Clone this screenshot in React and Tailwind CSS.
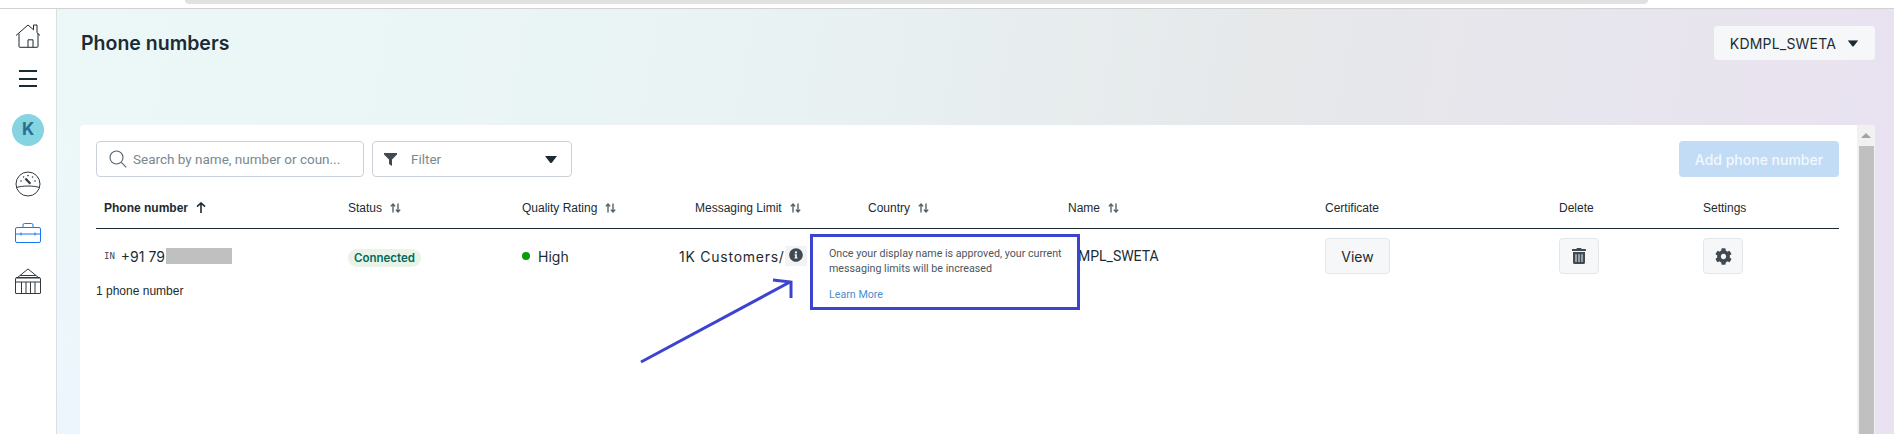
import React from "react";
import { FaTrashAlt, FaCog, FaInfoCircle } from "react-icons/fa";

const Sort = () => (
  <svg width="11" height="10" viewBox="0 0 11 10" className="ml-2 shrink-0" fill="none" stroke="#56636b" strokeWidth="1.4">
    <path d="M3 9.5V1M.8 3.4 3 1l2.2 2.4" />
    <path d="M8 .5V9M5.8 6.6 8 9l2.2-2.4" />
  </svg>
);

const Caret = ({ className = "" }) => (
  <svg width="12" height="7" viewBox="0 0 12 7" className={className}>
    <path d="M0 0h12L7 6.4a1.2 1.2 0 0 1-2 0z" fill="#1c2b33" />
  </svg>
);

const Funnel = () => (
  <svg width="13" height="13" viewBox="0 0 13 13" className="shrink-0">
    <path d="M0 0h13v1.6L8 6.6V13L5 11V6.6L0 1.6z" fill="#3f4a52" />
  </svg>
);

const Home = () => (
  <svg width="26" height="24" viewBox="0 0 26 24" fill="none" stroke="#1c2b33" strokeWidth="1">
    <path d="M1 11.5 13 1l5.5 4.8M22 8.8l3 2.7" />
    <path d="M18.5 5.8V1h3.5v7.8" />
    <path d="M4 9.5V22.5a.8.8 0 0 0 .8.8h17.4a.8.8 0 0 0 .8-.8V9.5" />
    <path d="M13 23.2V15.8h5v7.4" />
  </svg>
);

const Gauge = () => (
  <svg width="26" height="26" viewBox="0 0 26 26" fill="none" stroke="#2f3a41" strokeWidth="1">
    <circle cx="13" cy="13" r="12" />
    <path d="M1.6 16.5c6-2 16.8-2 22.8 0" />
    <path d="M10.4 7.6 15.4 12.8" strokeWidth="2.2" />
    <circle cx="6" cy="10" r=".8" fill="#2f3a41" stroke="none" />
    <circle cx="8.6" cy="6" r=".8" fill="#2f3a41" stroke="none" />
    <circle cx="13" cy="4.6" r=".8" fill="#2f3a41" stroke="none" />
    <circle cx="17.6" cy="6" r=".8" fill="#2f3a41" stroke="none" />
    <circle cx="20" cy="10" r=".8" fill="#2f3a41" stroke="none" />
  </svg>
);

const Briefcase = () => (
  <svg width="26" height="20" viewBox="0 0 26 20" fill="none" stroke="#1877f2" strokeWidth="1">
    <rect x=".5" y="4.5" width="25" height="15" rx="1.5" />
    <path d="M8 4.5V2a1.5 1.5 0 0 1 1.5-1.5h7A1.5 1.5 0 0 1 18 2v2.5" />
    <path d="M.5 11h25M6 9.5v3M20 9.5v3" />
  </svg>
);

const Bank = () => (
  <svg width="26" height="26" viewBox="0 0 26 26" fill="none" stroke="#2f3a41" strokeWidth="1">
    <path d="M2.5 9.5 13 1l10.5 8.5M1 9.5h24" />
    <rect x=".5" y="10" width="25" height="15.5" rx=".5" />
    <path d="M.5 14h25M6.5 14v11.5M11 14v11.5M15.5 14v11.5M20 14v11.5" />
    <path d="M5 7.5h16" />
  </svg>
);

const Search = () => (
  <svg width="18" height="18" viewBox="0 0 18 18" className="shrink-0" fill="none" stroke="#56636b" strokeWidth="1.1">
    <circle cx="7.5" cy="7.5" r="6.5" />
    <path d="m12.3 12.3 5 5" />
  </svg>
);

const headers = [
  ["Phone number", "up"],
  ["Status", true],
  ["Quality Rating", true],
  ["Messaging Limit", true],
  ["Country", true],
  ["Name", true],
  ["Certificate", false],
  ["Delete", false],
  ["Settings", false],
];

const grid = "grid grid-cols-[244px_174px_173px_173px_200px_257px_234px_144px_144px]";
const iconBtn = "flex items-center justify-center w-[40px] h-[36px] rounded border border-[#e4e7ea] bg-[#f6f7f9] text-[#3f4a52]";

export default function App() {
  return (
    <div className="relative h-[434px] w-[1894px] overflow-hidden bg-white font-['Inter','Liberation_Sans',sans-serif] text-[#1c2b33]">
      <div className="h-[9px] border-b border-[#d2d2d2] bg-white">
        <div className="ml-[185px] h-[4px] w-[1463px] rounded-b-[6px] bg-[#e1e1e1]" />
      </div>
      <div className="flex h-[425px]">
        <aside className="flex w-[57px] shrink-0 flex-col items-center border-r border-[#d8e0e6] bg-white pt-[15px]">
          <Home />
          <div className="mt-[22px] flex w-[18px] flex-col gap-[5.5px]">
            <div className="h-[2px] bg-[#1c2b33]" />
            <div className="h-[2px] bg-[#1c2b33]" />
            <div className="h-[2px] bg-[#1c2b33]" />
          </div>
          <div className="mt-[27px] flex h-[32px] w-[32px] items-center justify-center rounded-full bg-[#84d4e2] text-[17px] font-bold text-[#2b6f92]">K</div>
          <div className="mt-[25px]"><Gauge /></div>
          <div className="mt-[26px]"><Briefcase /></div>
          <div className="mt-[25px]"><Bank /></div>
        </aside>
        <main className="flex min-w-0 flex-1 flex-col bg-[radial-gradient(ellipse_420px_330px_at_0%_100%,#edf6fd_0%,rgba(237,246,253,0)_100%),linear-gradient(100deg,#ecf8f8_0%,#e9f3f4_35%,#e6e8ea_65%,#e9e2f1_100%)] pl-[23px] pr-[19px]">
          <header className="flex h-[116px] shrink-0 items-start justify-between">
            <h1 className="mt-[20px] pl-px text-[19.5px] font-semibold leading-[28px]">Phone numbers</h1>
            <button className="mt-[17px] flex h-[34px] w-[161px] items-center justify-center gap-[11px] rounded bg-[#f6f7f9] text-[14px] tracking-[0.2px]">
              KDMPL_SWETA
              <Caret className="scale-90" />
            </button>
          </header>
          <section className="flex min-h-0 flex-1 rounded-t bg-white">
            <div className="min-w-0 flex-1 pl-[16px] pr-[18px] pt-[16px]">
              <div className="flex h-[36px] gap-[8px]">
                <div className="flex w-[268px] items-center gap-[6px] rounded border border-[#cbd2d9] px-[12px] font-['Roboto',sans-serif] text-[13.5px] text-[#7a8891]">
                  <Search />
                  <span className="whitespace-nowrap">Search by name, number or coun...</span>
                </div>
                <div className="flex w-[200px] items-center rounded border border-[#cbd2d9] pl-[11px] pr-[14px] font-['Roboto',sans-serif] text-[13.5px] text-[#7a8891]">
                  <Funnel />
                  <span className="ml-[14px] flex-1">Filter</span>
                  <Caret />
                </div>
                <button className="ml-auto h-[36px] w-[160px] rounded bg-[#c2dcf5] text-[14px] font-medium text-[#f2f8fd]">Add phone number</button>
              </div>
              <div className={`${grid} mt-[10px] h-[42px] items-center border-b border-[#1c2b33] font-['Liberation_Sans',sans-serif] text-[12px] leading-[16px]`}>
                {headers.map(([label, sort]) => (
                  <div key={label} className={`flex items-center pl-[8px] ${sort === "up" ? "font-bold" : ""}`}>
                    {label}
                    {sort === "up" ? (
                      <svg width="10" height="11" viewBox="0 0 10 11" className="ml-[8px]" fill="none" stroke="#1c2b33" strokeWidth="1.6"><path d="M5 11V1M1 4.6 5 1l4 3.6" /></svg>
                    ) : sort ? <Sort /> : null}
                  </div>
                ))}
              </div>
              <div className={`${grid} h-[54px] items-center text-[14px]`}>
                <div className="flex items-center pl-[8px]">
                  <span className="mt-px font-['DejaVu_Sans_Mono',monospace] text-[9px] text-[#3f4a52]">IN</span>
                  <span className="ml-[6px]">+91 79</span>
                  <span className="ml-[1px] h-[16px] w-[66px] bg-[#c0c0c0]" />
                </div>
                <div className="pl-[8px]">
                  <span className="inline-block h-[18px] rounded-full bg-[#e9f3e7] px-[6px] text-[11.5px] font-semibold leading-[18px] text-[#00695c]">Connected</span>
                </div>
                <div className="flex items-center pl-[8px]">
                  <span className="h-[8px] w-[8px] rounded-full bg-[#0a9d0a]" />
                  <span className="ml-[8px]">High</span>
                </div>
                <div className="-ml-[8px] flex items-center whitespace-nowrap tracking-[0.75px]">
                  1K Customers/
                  <span className="flex h-[20px] w-[22px] items-center justify-center bg-[#f2f3f5]"><FaInfoCircle className="-mt-[2px] h-[14px] w-[14px] text-[#3f4a52]" /></span>
                </div>
                <div />
                <div className="font-['Roboto',sans-serif]">KDMPL_SWETA</div>
                <div className="pl-[8px]"><button className={`${iconBtn} !w-[65px] text-[14px] !text-[#1c2b33]`}>View</button></div>
                <div className="pl-[8px]"><button className={iconBtn}><FaTrashAlt className="h-[16px] w-[16px]" /></button></div>
                <div className="pl-[8px]"><button className={iconBtn}><FaCog className="h-[17px] w-[17px]" /></button></div>
              </div>
              <p className="font-['Liberation_Sans',sans-serif] text-[12px] leading-[16px]">1 phone number</p>
            </div>
            <div className="flex w-[18px] shrink-0 flex-col items-center bg-[#f1f1f1]">
              <div className="flex h-[21px] items-center justify-center">
                <div className="h-0 w-0 border-x-[5px] border-b-[5px] border-x-transparent border-b-[#a3a3a3]" />
              </div>
              <div className="w-[15px] flex-1 bg-[#c0c0c0]" />
            </div>
          </section>
        </main>
      </div>
      <div className="absolute left-[810px] top-[234px] h-[76px] w-[270px] border-[3px] border-[#3c44cf] bg-white pl-[16px] pt-[10px] font-['Roboto',sans-serif] text-[10.7px] leading-[14.5px] text-[#4b565e]">
        <p>Once your display name is approved, your current<br />messaging limits will be increased</p>
        <a className="mt-[12px] block text-[#4a8fd0]">Learn More</a>
      </div>
      <svg className="pointer-events-none absolute left-[630px] top-[270px]" width="170" height="100" viewBox="630 270 170 100" fill="none" stroke="#3c44cf" strokeWidth="3">
        <path d="M641 362 790 282" />
        <path d="M773 280 791 282V298" />
      </svg>
    </div>
  );
}
